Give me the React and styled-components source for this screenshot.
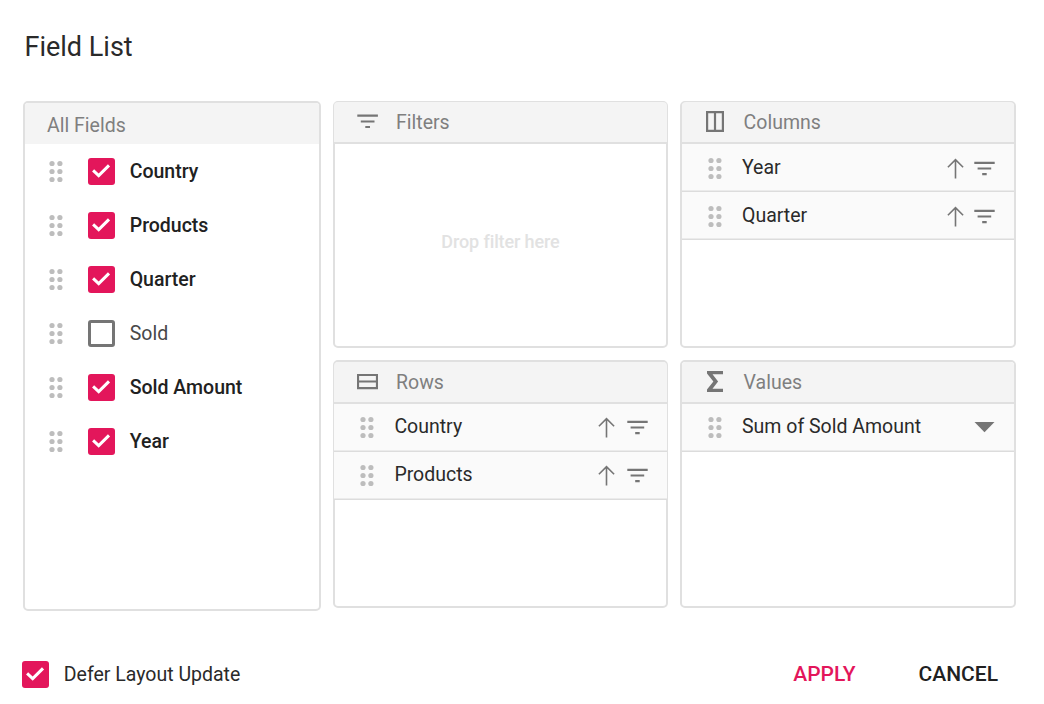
import React from 'react';
import styled, { createGlobalStyle } from 'styled-components';

const GlobalStyle = createGlobalStyle`
  *, *::before, *::after { box-sizing: border-box; }
  body {
    margin: 0;
    background: #fff;
    color: #2a2a2a;
    font-family: Roboto, "Liberation Sans", sans-serif;
    font-size: 19.5px;
  }
`;

const Dialog = styled.main`
  width: 1044px;
  height: 704px;
  display: flex;
  flex-direction: column;
  overflow: hidden;
`;

const Title = styled.h1`
  margin: 0;
  height: 101px;
  padding: 27px 24.5px 0;
  font-size: 27px;
  line-height: 40px;
  font-weight: 400;
`;

const Content = styled.div`
  display: flex;
  align-items: flex-start;
  gap: 12px;
  padding-left: 23px;
`;

const AllFields = styled.section`
  width: 298px;
  height: 510px;
  border: 2px solid #e0e0e0;
  border-radius: 5px;
  overflow: hidden;
`;

const AllFieldsHeader = styled.header`
  height: 41px;
  padding: 3px 22px 0;
  background: #f4f4f4;
  color: #7f7f7f;
  line-height: 40px;
`;

const List = styled.ul`
  margin: 0;
  padding: 0;
  list-style: none;
`;

const FieldItem = styled.li`
  display: flex;
  align-items: center;
  height: 54px;
  padding-left: 24px;
`;

const FieldLabel = styled.span`
  margin-left: 14.7px;
  font-weight: ${(p) => (p.$checked ? 500 : 400)};
  color: ${(p) => (p.$checked ? '#212121' : '#484848')};
`;

const Box = styled.span`
  display: flex;
  flex: none;
  width: 27px;
  height: 27px;
  margin-left: ${(p) => p.$gap || 0}px;
  border-radius: 3px;
  background: ${(p) => (p.$checked ? '#e3165b' : '#fff')};
  border: ${(p) => (p.$checked ? 'none' : '3px solid #757575')};
`;

const Axes = styled.div`
  display: grid;
  grid-template-columns: 335px 336px;
  grid-template-rows: 247px 248px;
  gap: 12px;
`;

const Panel = styled.section`
  display: flex;
  flex-direction: column;
  min-width: 0;
  border: 2px solid #e0e0e0;
  border-radius: 5px;
`;

const PanelHeader = styled.header`
  display: flex;
  align-items: center;
  flex: none;
  height: 42px;
  margin: ${(p) => (p.$up ? '-1px' : '0')} ${(p) => (p.$wide ? '-1px' : '0')} 0;
  padding-left: 22px;
  border-bottom: 2px solid #e0e0e0;
  border-radius: 4px 4px 0 0;
  background: #f4f4f4;
  color: #7f7f7f;
`;

const PanelTitle = styled.span`
  margin-left: ${(p) => (p.$wide ? 17 : 16.6)}px;
`;

const AxisItem = styled.li`
  display: flex;
  align-items: center;
  height: 48px;
  margin: 0 ${(p) => (p.$wide ? '-1px' : '0')};
  padding: ${(p) => (p.$up ? '2px' : '0')} 19px 0 ${(p) => (p.$wide ? '26.4px' : '26px')};
  border-bottom: 1px solid #dcdcdc;
  box-shadow: inset 0 -1px #ebebeb;
  background: #fafafa;
`;

const AxisLabel = styled.span`
  flex: 1;
  margin-left: 20px;
  line-height: 45px;
  padding-bottom: 2px;
`;

const Actions = styled.span`
  display: flex;
  align-items: center;
  gap: ${(p) => (p.$wide ? 12 : 10)}px;
`;

const Placeholder = styled.p`
  flex: 1;
  margin: 0;
  display: flex;
  align-items: center;
  justify-content: center;
  padding-bottom: 8px;
  font-size: 18px;
  font-weight: 500;
  letter-spacing: -0.12px;
  color: #e2e2e2;
`;

const Footer = styled.footer`
  display: flex;
  align-items: center;
  height: 54px;
  margin-top: 36px;
  padding: 0 46px 0 22px;
`;

const FooterLabel = styled.span`
  flex: 1;
  margin-left: 14.8px;
`;

const Button = styled.button`
  padding: 0;
  border: 0;
  background: none;
  margin-left: ${(p) => (p.$primary ? 0 : 63)}px;
  font: 500 21px/1 Roboto, "Liberation Sans", sans-serif;
  color: ${(p) => (p.$primary ? '#e3165b' : '#212121')};
`;

const Icon = styled.svg`
  display: block;
  flex: none;
`;

function Grip() {
  return (
    <Icon width="14" height="23" viewBox="0 0 14 23" fill="#bdbdbd">
      {[3, 10.9].map((x) =>
        [3.5, 11.5, 19.5].map((y) => <circle key={`${x}-${y}`} cx={x} cy={y} r="2.6" />)
      )}
    </Icon>
  );
}

function Checkbox({ checked, gap }) {
  return (
    <Box $checked={checked} $gap={gap}>
      {checked && (
        <Icon width="27" height="27" viewBox="0 0 27 27" fill="none" stroke="#fff" strokeWidth="3">
          <path d="M5.1 12.3 L10.7 17.6 L21 7.4" />
        </Icon>
      )}
    </Box>
  );
}

function FilterIcon() {
  return (
    <Icon width="21" height="15" viewBox="0 0 21 15" fill="#757575">
      <path d="M.3.8h20.4v2.3H.3zM3.6 6.4h13.6v2.1H3.6zM8.2 12.1h4.5v2.1H8.2z" />
    </Icon>
  );
}

function ArrowUp() {
  return (
    <Icon width="17" height="21" viewBox="0 0 17 21" fill="none" stroke="#757575" strokeWidth="1.6">
      <path d="M8.5 20.6V1.8M.9 9.3L8.5 1.7L16.1 9.3" />
    </Icon>
  );
}

function DropArrow() {
  return (
    <Icon width="21" height="11" viewBox="0 0 21 11" fill="#757575">
      <path d="M.5 0h20L10.5 10.3z" />
    </Icon>
  );
}

const headIcons = {
  Filters: <path d="M.3 3.4h20.6v2.4H.3zM3.8 9.5h13.7v2.1H3.8zM8.3 14.9h4.7v2.2H8.3z" />,
  Columns: <path fillRule="evenodd" d="M1 0h18v21H1zM3.2 2.2v16.6h5.7V2.2zM11.1 2.2v16.6h5.7V2.2z" />,
  Rows: <path fillRule="evenodd" d="M0 3h21v15.2H0zM2.1 5.1v4.4h16.8V5.1zM2.1 11.6v4.5h16.8v-4.5z" />,
  Values: <path d="M2 0h16v3.2H7.5L13.1 10.5L7.5 17.8H18V21H2v-2.6L8.4 10.5L2 2.6z" />,
};

function AxisPanel({ name, items = [], wide, up, dropdown, children }) {
  return (
    <Panel>
      <PanelHeader $wide={wide} $up={up}>
        <Icon width="23" height="22" viewBox="-1 0 23 22" fill="#757575">
          {headIcons[name]}
        </Icon>
        <PanelTitle $wide={wide}>{name}</PanelTitle>
      </PanelHeader>
      {children || (
        <List>
          {items.map((item) => (
            <AxisItem key={item} $wide={wide} $up={up}>
              <Grip />
              <AxisLabel>{item}</AxisLabel>
              <Actions $wide={wide}>
                {dropdown ? <DropArrow /> : <><ArrowUp /><FilterIcon /></>}
              </Actions>
            </AxisItem>
          ))}
        </List>
      )}
    </Panel>
  );
}

const fields = [
  ['Country', true],
  ['Products', true],
  ['Quarter', true],
  ['Sold', false],
  ['Sold Amount', true],
  ['Year', true],
];

export default function App() {
  return (
    <>
      <GlobalStyle />
      <Dialog>
        <Title>Field List</Title>
        <Content>
          <AllFields>
            <AllFieldsHeader>All Fields</AllFieldsHeader>
            <List>
              {fields.map(([name, checked]) => (
                <FieldItem key={name}>
                  <Grip />
                  <Checkbox checked={checked} gap={25} />
                  <FieldLabel $checked={checked}>{name}</FieldLabel>
                </FieldItem>
              ))}
            </List>
          </AllFields>
          <Axes>
            <AxisPanel name="Filters" wide up>
              <Placeholder>Drop filter here</Placeholder>
            </AxisPanel>
            <AxisPanel name="Columns" items={['Year', 'Quarter']} up />
            <AxisPanel name="Rows" items={['Country', 'Products']} wide />
            <AxisPanel name="Values" items={['Sum of Sold Amount']} dropdown />
          </Axes>
        </Content>
        <Footer>
          <Checkbox checked />
          <FooterLabel>Defer Layout Update</FooterLabel>
          <Button $primary>APPLY</Button>
          <Button>CANCEL</Button>
        </Footer>
      </Dialog>
    </>
  );
}
